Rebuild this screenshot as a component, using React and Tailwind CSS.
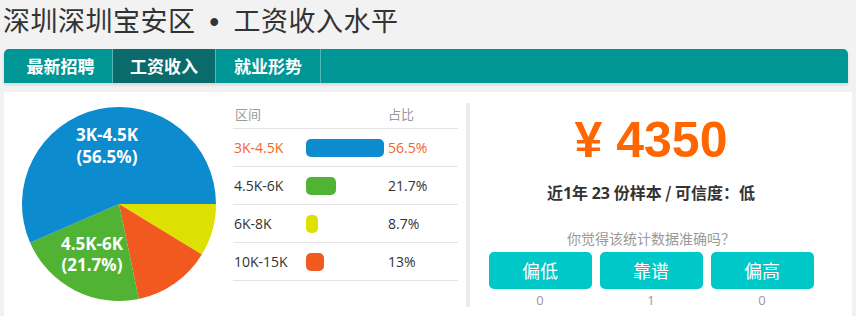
import React from "react";

const ranges = [
  { label: "3K-4.5K", pct: 56.5, color: "#0d8bcf", hot: true },
  { label: "4.5K-6K", pct: 21.7, color: "#50b333" },
  { label: "6K-8K", pct: 8.7, color: "#dde000" },
  { label: "10K-15K", pct: 13, color: "#f1591f" },
];

// pie goes clockwise from 3 o'clock: yellow, orange, green, blue
const pieOrder = [2, 3, 1, 0];

const CX = 98;
const CY = 98;
const R = 97;

const arcPath = (start, end) => {
  const a0 = start * Math.PI * 2;
  const a1 = end * Math.PI * 2;
  const x0 = CX + R * Math.cos(a0);
  const y0 = CY + R * Math.sin(a0);
  const x1 = CX + R * Math.cos(a1);
  const y1 = CY + R * Math.sin(a1);
  const large = end - start > 0.5 ? 1 : 0;
  return `M${CX},${CY} L${x0},${y0} A${R},${R} 0 ${large} 1 ${x1},${y1} Z`;
};

const Pie = () => {
  const total = ranges.reduce((s, r) => s + r.pct, 0);
  let acc = 0;
  return (
    <svg width="196" height="196" viewBox="0 0 196 196">
      {pieOrder.map((i) => {
        const start = acc / total;
        acc += ranges[i].pct;
        return <path key={i} d={arcPath(start, acc / total)} fill={ranges[i].color} />;
      })}
      <g fill="#fff" fontSize="17" fontWeight="700" textAnchor="middle" style={{ fontFamily: '"Open Sans", sans-serif' }}>
        <text x="86" y="35">3K-4.5K</text>
        <text x="86" y="57">(56.5%)</text>
        <text x="71" y="144">4.5K-6K</text>
        <text x="71" y="165">(21.7%)</text>
      </g>
    </svg>
  );
};

const tabs = ["最新招聘", "工资收入", "就业形势"];
const tabWidths = ["w-[109px]", "w-[103px]", "w-[105px]"];

export default function App() {
  return (
    <div className="w-[856px] h-[316px] overflow-hidden bg-[#f2f2f2] font-['Noto_Sans_CJK_SC',sans-serif]">
      <h1 className="h-[40px] pl-[3px] text-[27px] leading-[40px] text-[#333] tracking-[0.5px]">
        深圳深圳宝安区<span className="mx-[14px] font-['Liberation_Sans',sans-serif] font-bold">•</span>工资收入水平
      </h1>

      {/* tabs */}
      <div className="ml-1 mt-[9px] w-[844px] h-[34px] flex rounded-t-[5px] bg-[#009696] shadow-[0_2px_3px_rgba(0,0,0,0.12)]">
        {tabs.map((t, i) => (
          <div
            key={t}
            className={`${tabWidths[i]} h-full flex items-center justify-center border-r border-[#52b7b7] text-white text-[17px] font-bold ${
              i === 1 ? "bg-[#0a6a6c]" : ""
            } ${i === 0 ? "rounded-tl-[5px] pl-[5px]" : ""}`}
          >
            {t}
          </div>
        ))}
      </div>

      {/* body */}
      <div className="mx-1 mt-[9px] h-[224px] bg-white flex">
        <div className="w-[229px] pl-[17px] pt-[14px]">
          <Pie />
        </div>

        <div className="w-[225px] font-['Open_Sans','Noto_Sans_CJK_SC',sans-serif]">
          <div className="h-[37px] pt-[12px] flex border-b border-[#e3e3e8] text-[13px] text-[#999] leading-[20px]">
            <span className="w-[155px] pl-[2px]">区间</span>
            <span>占比</span>
          </div>
          {ranges.map((r) => (
            <div
              key={r.label}
              className={`h-[38px] flex items-center border-b border-[#e3e3e8] text-[14px] ${
                r.hot ? "text-[#f2662c]" : "text-[#333]"
              }`}
            >
              <span className="w-[73px] pl-[1px]">{r.label}</span>
              <span className="w-[82px]">
                <span
                  className="block h-[18px] rounded-[5px]"
                  style={{ width: Math.round(r.pct * 1.38), background: r.color }}
                />
              </span>
              <span>{r.pct}%</span>
            </div>
          ))}
        </div>

        <div className="ml-[8px] mt-[11px] w-[4px] h-[204px] bg-[#ececec]" />

        <div className="w-[362px] flex flex-col items-center">
          <div className="pt-[20px] h-[76px] leading-[56px] text-[50px] font-bold text-[#ff6600] font-['Liberation_Sans','Noto_Sans_CJK_SC',sans-serif]">
            ¥ 4350
          </div>
          <div className="mt-[12px] leading-[24px] text-[16px] font-bold text-[#333]">
            近<span className="font-['Open_Sans',sans-serif]">1</span>年 <span className="font-['Open_Sans',sans-serif]">23</span> 份样本 / 可信度：低
          </div>
          <div className="mt-[23px] leading-[20px] text-[14px] text-[#999]">你觉得该统计数据准确吗？</div>
          <div className="mt-[4px] flex gap-2">
            {["偏低", "靠谱", "偏高"].map((b, i) => (
              <div key={b} className="w-[103px] flex flex-col items-center">
                <button className="w-full h-[37px] rounded-[5px] bg-[#00c8c8] text-white text-[18px]">{b}</button>
                <span className="mt-[3px] leading-[16px] text-[13px] text-[#999] font-['Open_Sans',sans-serif]">
                  {i === 1 ? 1 : 0}
                </span>
              </div>
            ))}
          </div>
        </div>
      </div>
    </div>
  );
}
